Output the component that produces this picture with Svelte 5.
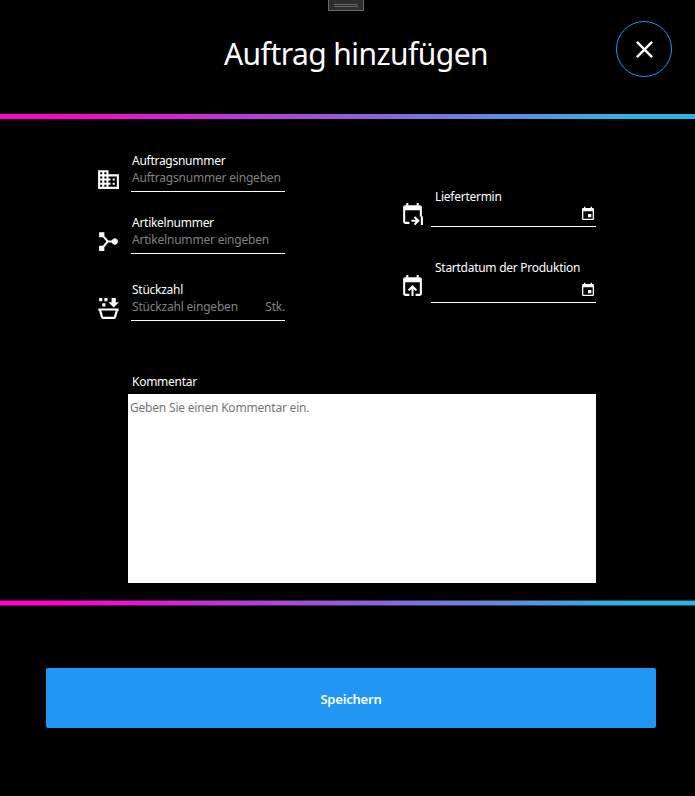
<script>
  const orders = [
    { id: 'auftrag', label: 'Auftragsnummer', hint: 'Auftragsnummer eingeben', icon: 'domain' },
    { id: 'artikel', label: 'Artikelnummer', hint: 'Artikelnummer eingeben', icon: 'graph' },
    { id: 'stueck', label: 'Stückzahl', hint: 'Stückzahl eingeben', unit: 'Stk.', icon: 'pot' }
  ];
  const dates = [
    { id: 'liefer', label: 'Liefertermin', icon: 'end' },
    { id: 'start', label: 'Startdatum der Produktion', icon: 'export' }
  ];
</script>

{#snippet icon(name)}
  <svg class="icon" viewBox="0 0 24 24" aria-hidden="true">
    {#if name === 'domain'}
      <path d="M18,15H16V17H18M18,11H16V13H18M20,19H12V17H14V15H12V13H14V11H12V9H20M10,7H8V5H10M10,11H8V9H10M10,15H8V13H10M10,19H8V17H10M6,7H4V5H6M6,11H4V9H6M6,15H4V13H6M6,19H4V17H6M12,7V3H2V21H22V7H12Z" />
    {:else if name === 'graph'}
      <path d="M3 3H8V6.6L11.8 11H15.2A3 3 0 1 1 15.2 13H11.8L8 17.4V21H3V16H6.6L10 12L6.6 8H3Z" />
    {:else if name === 'pot'}
      <path d="M3 2H6V5H3ZM8 2H11V5H8ZM6 7H9V10H6ZM15 2H19V6H22L17 11L12 6H15ZM2.3 12H21.7V14.5H21L19.3 20.4Q18.9 22 17.3 22H6.7Q5.1 22 4.7 20.4L3 14.5H2.3ZM5.1 14L6.8 20H17.2L18.9 14Z" fill-rule="evenodd" />
    {:else if name === 'end'}
      <path d="M5 3H6V1H8V3H16V1H18V3H19A2 2 0 0 1 21 5V14H19V8H5V19H9V21H5A2 2 0 0 1 3 19V5A2 2 0 0 1 5 3M20 14H22V22H20ZM14.6 13.6L19 18L14.6 22.4L13.2 21L15.2 19H11V17H15.2L13.2 15Z" />
    {:else if name === 'export'}
      <path d="M5 3H6V1H8V3H16V1H18V3H19A2 2 0 0 1 21 5V19A2 2 0 0 1 19 21H15V19H19V8H5V19H9V21H5A2 2 0 0 1 3 19V5A2 2 0 0 1 5 3M12 10.5L16.5 15L15.1 16.4L13 14.3V21H11V14.3L8.9 16.4L7.5 15Z" />
    {:else if name === 'calendar'}
      <path d="M19,19H5V8H19M16,1V3H8V1H6V3H5C3.89,3 3,3.89 3,5V19A2,2 0 0,0 5,21H19A2,2 0 0,0 21,19V5C21,3.89 20.1,3 19,3H18V1M17,12H12V17H17V12Z" />
    {:else}
      <path d="M19,6.41L17.59,5L12,10.59L6.41,5L5,6.41L10.59,12L5,17.59L6.41,19L12,13.41L17.59,19L19,17.59L13.41,12L19,6.41Z" />
    {/if}
  </svg>
{/snippet}

<main>
  <div class="grip"><i></i></div>
  <header>
    <h1>Auftrag hinzufügen</h1>
    <button class="close" aria-label="Schließen">{@render icon('close')}</button>
  </header>
  <div class="rule"></div>

  <section>
    <div class="columns">
      <div class="left">
        {#each orders as f}
          <div class="row {f.id}">
            {@render icon(f.icon)}
            <div class="field">
              <span class="label">{f.label}</span>
              <div class="entry"><span class="hint">{f.hint}</span>{#if f.unit}<span class="unit">{f.unit}</span>{/if}</div>
            </div>
          </div>
        {/each}
      </div>
      <div class="right">
        {#each dates as f}
          <div class="row {f.id}">
            {@render icon(f.icon)}
            <div class="field">
              <span class="label">{f.label}</span>
              <div class="picker">{@render icon('calendar')}</div>
            </div>
          </div>
        {/each}
      </div>
    </div>
    <div class="comment">
      <span class="label">Kommentar</span>
      <div class="area">Geben Sie einen Kommentar ein.</div>
    </div>
  </section>

  <div class="rule soft"></div>
  <footer><button class="save">Speichern</button></footer>
</main>

<style>
  :global(body) { margin: 0; background: #000; }
  main {
    position: relative;
    display: flex;
    flex-direction: column;
    width: 695px;
    height: 796px;
    overflow: hidden;
    background: #000;
    color: #fff;
    font: 12px/16px 'Segoe UI', 'Noto Sans', 'Open Sans', sans-serif;
  }
  * { box-sizing: border-box; }
  .icon { display: block; flex: none; width: 25px; height: 25px; fill: #fff; }
  .grip {
    position: absolute;
    left: 328px;
    top: -1px;
    width: 36px;
    height: 12px;
    padding: 4px 5px 0;
    border: 1px solid #686868;
    background: #2d2d30;
  }
  .grip i { display: block; height: 3px; border: solid #686868; border-width: 1px 0; }
  header {
    display: flex;
    flex: none;
    justify-content: flex-end;
    height: 114px;
    padding: 21px 23px 0 0;
  }
  h1 {
    width: 258px;
    margin: 13px 134px 0 0;
    font-size: 30px;
    line-height: 40px;
    font-weight: 400;
    letter-spacing: -0.55px;
    white-space: nowrap;
  }
  .close {
    display: grid;
    place-items: center;
    width: 56px;
    height: 56px;
    padding: 0;
    border: 1px solid #2196f3;
    border-radius: 50%;
    background: none;
  }
  .close .icon, .close :global(svg) { width: 29px; height: 29px; }
  .rule {
    flex: none;
    height: 5px;
    background: linear-gradient(90deg, #ff00ce 8%, #2eb5e5 91%);
  }
  .soft { height: 6px; border: solid #0008; border-width: 1px 0; background-origin: border-box; }
  section { flex: none; height: 481px; padding: 34px 99px 0 96px; }
  .columns { display: flex; justify-content: space-between; height: 221px; }
  .row { display: flex; align-items: flex-end; }
  .field { display: flex; flex-direction: column; }
  .label { padding-left: 1px; letter-spacing: -0.27px; white-space: nowrap; }
  .left .row { gap: 10px; height: 39px; }
  .left .field { width: 154px; height: 39px; border-bottom: 1px solid #fff; }
  .entry {
    display: flex;
    justify-content: space-between;
    margin-top: 1px;
    padding-left: 1px;
    color: #808080;
    letter-spacing: -0.2px;
    white-space: nowrap;
  }
  .left .artikel { margin-top: 23px; }
  .left .stueck { margin-top: 28px; }
  .right { padding-top: 36px; }
  .right .row { gap: 6px; height: 38px; }
  .right .field { width: 165px; height: 38px; border-bottom: 1px solid #fff; }
  .right .label { padding-left: 4px; }
  .right .start { height: 43px; margin-top: 33px; }
  .right .start .field { height: 43px; }
  .right .start > :global(svg) { margin-bottom: 4px; }
  .picker { display: flex; flex: 1; align-items: flex-end; justify-content: flex-end; }
  .picker :global(svg) { width: 16px; height: 16px; margin: 0 0 4px; }
  .comment { display: flex; flex-direction: column; padding-left: 32px; }
  .comment .label { padding-left: 4px; }
  .area {
    height: 189px;
    margin-top: 4px;
    padding: 6px 2px;
    background: #fff;
    color: #757575;
    letter-spacing: -0.2px;
  }
  footer { display: flex; padding: 62px 39px 0 46px; }
  .save {
    width: 610px;
    height: 60px;
    padding: 2px 0 0;
    border: 0;
    border-radius: 2px;
    background: #2196f3;
    color: #fff;
    font: 600 13px/18px 'Segoe UI', 'Noto Sans', 'Open Sans', sans-serif;
    letter-spacing: -0.2px;
  }
</style>
